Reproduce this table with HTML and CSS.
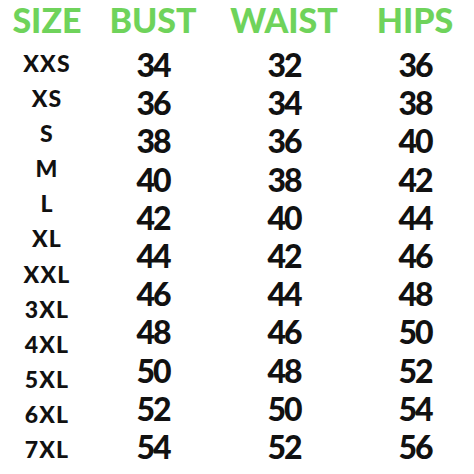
FILE: index.html
```html
<!DOCTYPE html>
<html>
<head>
<meta charset="utf-8">
<link rel="stylesheet" href="styles.css">
</head>
<body>
<div class="chart">
  <div class="head">
    <div class="h">SIZE</div>
    <div class="h">BUST</div>
    <div class="h">WAIST</div>
    <div class="h">HIPS</div>
  </div>
  <div class="body">
    <div class="col sizes">
      <div>XXS</div><div>XS</div><div>S</div><div>M</div><div>L</div><div>XL</div>
      <div>XXL</div><div>3XL</div><div>4XL</div><div>5XL</div><div>6XL</div><div>7XL</div>
    </div>
    <div class="col nums">
      <div>34</div><div>36</div><div>38</div><div>40</div><div>42</div><div>44</div>
      <div>46</div><div>48</div><div>50</div><div>52</div><div>54</div>
    </div>
    <div class="col nums">
      <div>32</div><div>34</div><div>36</div><div>38</div><div>40</div><div>42</div>
      <div>44</div><div>46</div><div>48</div><div>50</div><div>52</div>
    </div>
    <div class="col nums">
      <div>36</div><div>38</div><div>40</div><div>42</div><div>44</div><div>46</div>
      <div>48</div><div>50</div><div>52</div><div>54</div><div>56</div>
    </div>
  </div>
</div>
</body>
</html>
```
FILE: styles.css
```css
html, body {
  margin: 0;
  padding: 0;
  background: #ffffff;
}
body {
  width: 474px;
  height: 474px;
  overflow: hidden;
  font-family: Lato, "Liberation Sans", sans-serif;
  font-weight: 900;
  color: #111111;
}
.head, .body {
  display: grid;
  grid-template-columns: 94px 118px 144px 118px;
}
.head {
  height: 40px;
}
.h {
  text-align: center;
  font-size: 34px;
  line-height: 40px;
  color: #6fd35b;
  letter-spacing: 0;
}
.body {
  padding-top: 6px;
}
.col {
  display: flex;
  flex-direction: column;
  align-items: center;
}
.sizes div {
  height: 35.1px;
  line-height: 35px;
  font-size: 23px;
  letter-spacing: 1.2px;
}
.nums div {
  height: 38.2px;
  line-height: 38px;
  font-size: 32px;
  letter-spacing: -2px;
}
```
